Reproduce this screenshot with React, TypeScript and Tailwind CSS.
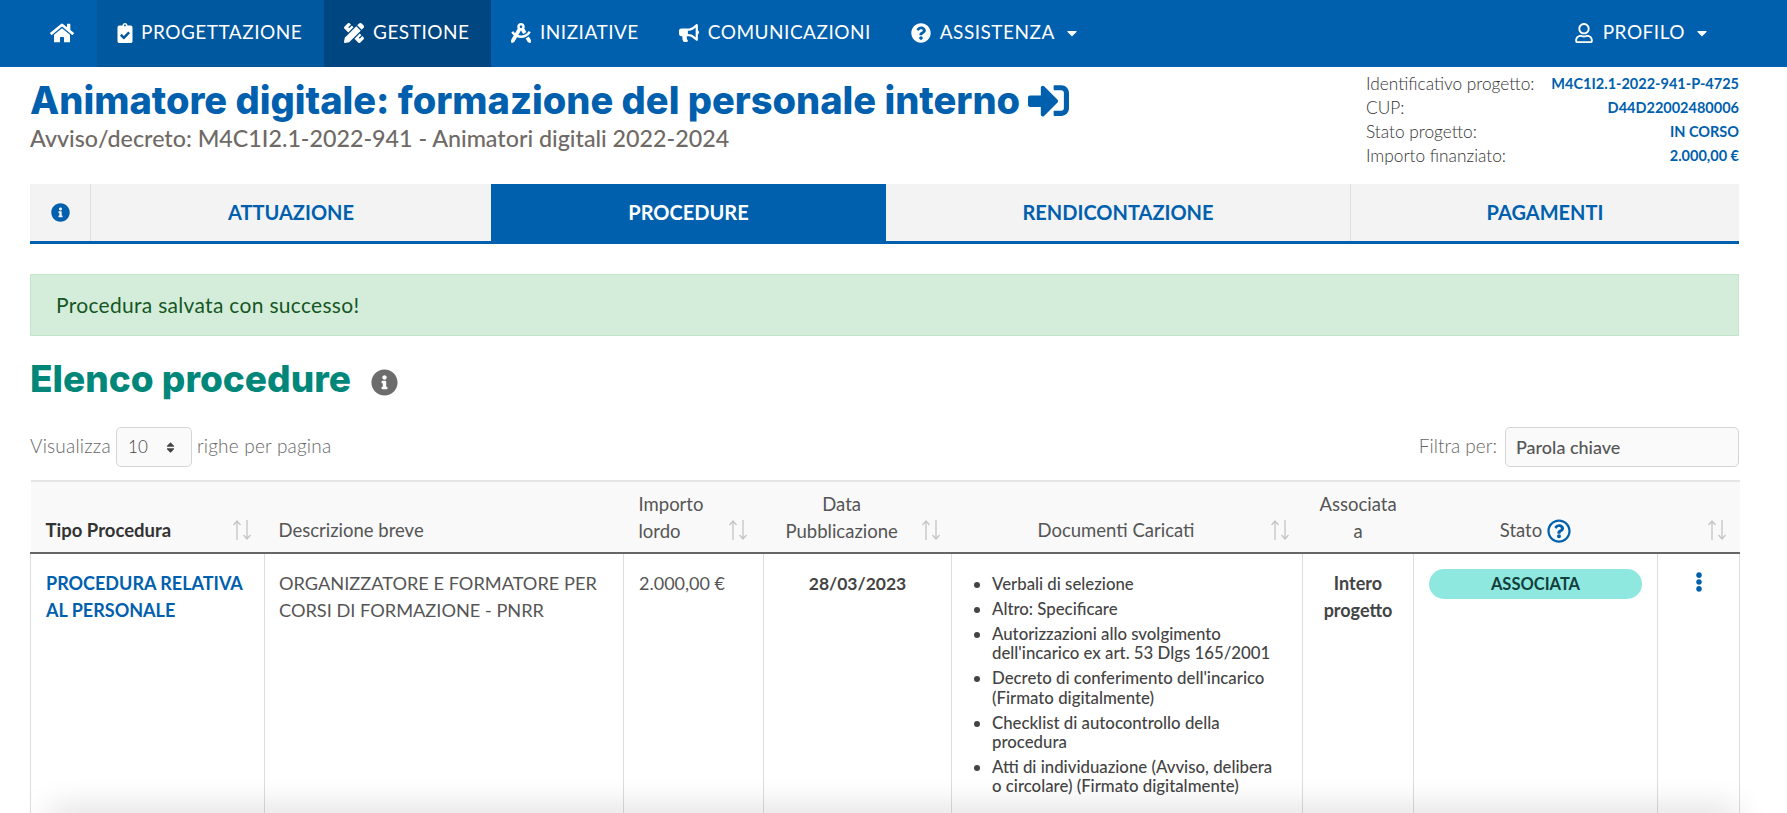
import {
  FaHome,
  FaClipboardCheck,
  FaPencilRuler,
  FaDraftingCompass,
  FaBullhorn,
  FaQuestionCircle,
  FaRegUser,
  FaCaretDown,
  FaSignInAlt,
  FaInfoCircle,
  FaRegQuestionCircle,
  FaEllipsisV,
  FaSort,
} from "react-icons/fa";
import type { ReactNode } from "react";

const BLUE = "text-[#0060ad]";

function NavItem({ icon, label, className = "", caret }: { icon: ReactNode; label: string; className?: string; caret?: boolean }) {
  return (
    <div className={`flex h-full items-center gap-[9px] px-[20px] pb-[2px] text-[19px] tracking-[0.5px] text-white ${className}`}>
      <span className="text-[20px]">{icon}</span>
      <span>{label}</span>
      {caret && <FaCaretDown className="ml-0 text-[16px]" />}
    </div>
  );
}

function InfoRow({ label, value }: { label: string; value: string }) {
  return (
    <div className="flex h-[24px] items-center justify-between">
      <span className="text-[17.3px] font-light text-[#333]">{label}</span>
      <span className={`text-[14.5px] font-bold ${BLUE}`}>{value}</span>
    </div>
  );
}

function SortArrows() {
  return (
    <svg width="22" height="24" viewBox="0 0 22 24" className="mb-[3px] shrink-0" fill="none" stroke="#c4c4c4" strokeWidth="1.3">
      <path d="M6 22V3M2.5 7 6 3l3.5 4" />
      <path d="M16 2v19M12.5 17l3.5 4 3.5-4" />
    </svg>
  );
}

const docs = [
  "Verbali di selezione",
  "Altro: Specificare",
  "Autorizzazioni allo svolgimento dell'incarico ex art. 53 Dlgs 165/2001",
  "Decreto di conferimento dell'incarico (Firmato digitalmente)",
  "Checklist di autocontrollo della procedura",
  "Atti di individuazione (Avviso, delibera o circolare) (Firmato digitalmente)",
];

export default function App() {
  return (
    <div className="relative h-[813px] overflow-hidden bg-white font-['Lato',sans-serif] text-[#555]">
      <nav className="flex h-[67px] items-center justify-between bg-[#0060ad] pr-[57px]">
        <div className="flex h-full items-center">
          <div className="flex h-full w-[97px] items-center pb-[2px] pl-[50px] text-[24px] text-white">
            <FaHome />
          </div>
          <NavItem
            icon={<FaClipboardCheck className="-mr-[3px] -ml-[2px]" />}
            label="PROGETTAZIONE"
            className="w-[227px] bg-[#00589f]"
          />
          <NavItem icon={<FaPencilRuler />} label="GESTIONE" className="w-[167px] bg-[#004680]" />
          <NavItem icon={<FaDraftingCompass />} label="INIZIATIVE" />
          <NavItem icon={<FaBullhorn />} label="COMUNICAZIONI" />
          <NavItem icon={<FaQuestionCircle />} label="ASSISTENZA" caret />
        </div>
        <NavItem icon={<FaRegUser />} label="PROFILO" caret />
      </nav>

      <main className="pr-[48px] pl-[30px]">
        <header className="flex h-[117px] items-start justify-between">
          <div className="pt-[10px]">
            <h1 className={`flex items-center gap-[8px] font-['Inter',sans-serif] text-[38px] leading-[46px] font-extrabold ${BLUE}`}>
              Animatore digitale: formazione del personale interno
              <FaSignInAlt className="text-[41px]" />
            </h1>
            <p className="mt-[2px] text-[23.25px] leading-[26px] font-medium text-[#6f6a66]">
              Avviso/decreto: M4C1I2.1-2022-941 - Animatori digitali 2022-2024
            </p>
          </div>
          <div className="w-[373px] pt-[5px]">
            <InfoRow label="Identificativo progetto:" value="M4C1I2.1-2022-941-P-4725" />
            <InfoRow label="CUP:" value="D44D22002480006" />
            <InfoRow label="Stato progetto:" value="IN CORSO" />
            <InfoRow label="Importo finanziato:" value="2.000,00 €" />
          </div>
        </header>

        <div className="flex h-[60px] border-b-[3px] border-[#0060ad] bg-[#f3f3f3] pb-0 text-[20px] font-bold">
          <div className={`flex w-[61px] items-center justify-center border-r border-[#ddd] text-[19px] ${BLUE}`}>
            <FaInfoCircle />
          </div>
          <div className={`flex w-[400px] items-center justify-center pb-[2px] ${BLUE}`}>ATTUAZIONE</div>
          <div className="flex w-[395px] items-center justify-center bg-[#0060ad] pb-[2px] text-white">PROCEDURE</div>
          <div className={`flex w-[465px] items-center justify-center border-r border-[#ddd] pb-[2px] ${BLUE}`}>RENDICONTAZIONE</div>
          <div className={`flex flex-1 items-center justify-center pb-[2px] ${BLUE}`}>PAGAMENTI</div>
        </div>

        <div className="mt-[30px] flex h-[62px] items-center border border-[#c3e6cb] bg-[#d4edda] px-[25px] text-[21px] tracking-[0.3px] text-[#155724]">
          Procedura salvata con successo!
        </div>

        <div className="mt-[18px] flex h-[50px] items-center gap-[20px]">
          <h2 className="font-['Inter',sans-serif] text-[37px] font-extrabold text-[#00877a]">Elenco procedure</h2>
          <FaInfoCircle className="mt-[6px] text-[27px] text-[#6c6c6c]" />
        </div>

        <div className="mt-[23px] flex h-[40px] items-center justify-between">
          <div className="flex items-center gap-[5px] text-[19px] font-light tracking-[0.2px] text-[#666]">
            <span className="-mt-[2px]">Visualizza</span>
            <div className="flex h-[40px] w-[76px] items-center justify-between rounded-[5px] border border-[#d5d5d5] bg-[#fafafa] pr-[14px] pl-[11px] text-[17px] text-[#444]">
              10
              <FaSort className="text-[13px] text-[#444]" />
            </div>
            <span className="-mt-[2px]">righe per pagina</span>
          </div>
          <div className="flex items-center gap-[8px] text-[19px] font-light text-[#666]">
            <span className="-mt-[2px]">Filtra per:</span>
            <div className="flex h-[40px] w-[234px] items-center rounded-[5px] border border-[#d5d5d5] bg-[#fafafa] px-[10px] text-[18px] font-medium text-[#555]">
              Parola chiave
            </div>
          </div>
        </div>

        <table className="mt-[13px] w-[1709px] table-fixed border-collapse text-[18.5px]">
          <colgroup>
            <col className="w-[234px]" />
            <col className="w-[359px]" />
            <col className="w-[140px]" />
            <col className="w-[188px]" />
            <col className="w-[351px]" />
            <col className="w-[111px]" />
            <col className="w-[244px]" />
            <col className="w-[82px]" />
          </colgroup>
          <thead>
            <tr className="h-[72px] border-t-2 border-b-2 border-t-[#e5e5e5] border-b-[#666] bg-[#f9f9f9]">
              <th className="pr-[12px] pb-[7px] pl-[15px] align-bottom">
                <div className="flex items-end justify-between text-[18.5px] font-bold text-[#333]">
                  Tipo Procedura
                  <SortArrows />
                </div>
              </th>
              <th className="px-[14px] pb-[7px] text-left align-bottom font-normal">Descrizione breve</th>
              <th className="px-[15px] pb-[7px] align-bottom font-normal">
                <div className="flex items-end justify-between text-left">
                  <span className="leading-[27px]">Importo<br />lordo</span>
                  <SortArrows />
                </div>
              </th>
              <th className="pr-[10px] pl-[22px] pb-[7px] align-bottom font-normal">
                <div className="flex items-end justify-between">
                  <span className="leading-[27px]">Data<br />Pubblicazione</span>
                  <SortArrows />
                </div>
              </th>
              <th className="px-[12px] pb-[7px] align-bottom font-normal">
                <div className="flex items-end justify-between">
                  <span className="flex-1 text-center">Documenti Caricati</span>
                  <SortArrows />
                </div>
              </th>
              <th className="px-[10px] pb-[7px] text-center align-bottom leading-[27px] font-normal">Associata<br />a</th>
              <th className="px-[15px] pb-[7px] align-bottom font-normal">
                <div className="flex items-center justify-center gap-[5px]">
                  Stato
                  <FaRegQuestionCircle className={`text-[24px] ${BLUE}`} />
                </div>
              </th>
              <th className="pr-[12px] pb-[7px] align-bottom">
                <div className="flex justify-end">
                  <SortArrows />
                </div>
              </th>
            </tr>
          </thead>
          <tbody>
            <tr className="h-[300px] border-x border-[#ddd] align-top">
              <td className="border-r border-[#ddd] px-[15px] pt-[16px] text-[18px] leading-[27.4px] font-bold">
                <span className={BLUE}>PROCEDURA RELATIVA AL PERSONALE</span>
              </td>
              <td className="border-r border-[#ddd] px-[14px] pt-[16px] text-[18.2px] leading-[27.4px] text-[#555]">
                ORGANIZZATORE E FORMATORE PER CORSI DI FORMAZIONE - PNRR
              </td>
              <td className="border-r border-[#ddd] px-[15px] pt-[16px] text-[18px] leading-[27.4px] text-[#555]">2.000,00 €</td>
              <td className="border-r border-[#ddd] px-[15px] pt-[16px] text-center text-[17.5px] leading-[27.4px] font-bold text-[#444]">
                28/03/2023
              </td>
              <td className="border-r border-[#ddd] px-[15px] pt-[20px]">
                <ul className="list-disc pr-[12px] pl-[25px] text-[16.8px] leading-[19.5px] font-medium text-[#444]">
                  {docs.map((d) => (
                    <li key={d} className="mb-[5.4px]">{d}</li>
                  ))}
                </ul>
              </td>
              <td className="border-r border-[#ddd] px-[10px] pt-[16px] text-center text-[18px] leading-[27.4px] font-bold text-[#444]">
                Intero progetto
              </td>
              <td className="border-r border-[#ddd] px-[15px] pt-[15px]">
                <div className="flex h-[30px] items-center justify-center rounded-full bg-[#8fe8e0] text-[16.5px] font-bold text-[#123f3b]">
                  ASSOCIATA
                </div>
              </td>
              <td className="pt-[18px] text-center">
                <FaEllipsisV className={`mx-auto text-[20px] ${BLUE}`} />
              </td>
            </tr>
          </tbody>
        </table>
      </main>

      <div className="absolute right-[50px] -bottom-[10px] left-[50px] h-[10px] shadow-[0_0_32px_rgba(0,0,0,0.3)]" />
    </div>
  );
}
